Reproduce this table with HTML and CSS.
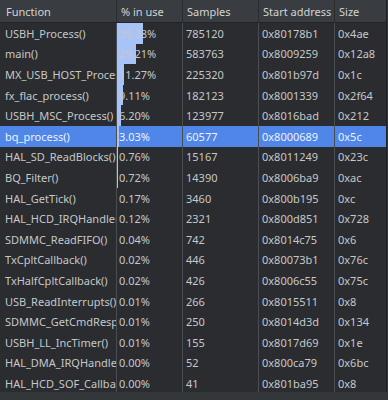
FILE: index.html
```html
<!DOCTYPE html>
<html>
<head>
<meta charset="utf-8">
<link rel="stylesheet" href="styles.css">
</head>
<body>
<div class="table">
  <div class="header">
    <div class="hcell">Function</div>
    <div class="hcell">% in use</div>
    <div class="hcell">Samples</div>
    <div class="hcell">Start address</div>
    <div class="hcell">Size</div>
  </div>
  <div class="rows">
    <div class="row"><div class="cell fn">USBH_Process()</div><div class="cell pct"><span class="bar" style="width:39.28%"></span><span class="val">39.28%</span></div><div class="cell">785120</div><div class="cell">0x80178b1</div><div class="cell">0x4ae</div></div>
    <div class="row"><div class="cell fn">main()</div><div class="cell pct"><span class="bar" style="width:29.21%"></span><span class="val">29.21%</span></div><div class="cell">583763</div><div class="cell">0x8009259</div><div class="cell">0x12a8</div></div>
    <div class="row"><div class="cell fn">MX_USB_HOST_Process()</div><div class="cell pct"><span class="bar" style="width:11.27%"></span><span class="val">11.27%</span></div><div class="cell">225320</div><div class="cell">0x801b97d</div><div class="cell">0x1c</div></div>
    <div class="row"><div class="cell fn">fx_flac_process()</div><div class="cell pct"><span class="bar" style="width:9.11%"></span><span class="val">9.11%</span></div><div class="cell">182123</div><div class="cell">0x8001339</div><div class="cell">0x2f64</div></div>
    <div class="row"><div class="cell fn">USBH_MSC_Process()</div><div class="cell pct"><span class="bar" style="width:6.20%"></span><span class="val">6.20%</span></div><div class="cell">123977</div><div class="cell">0x8016bad</div><div class="cell">0x212</div></div>
    <div class="row sel"><div class="cell fn">bq_process()</div><div class="cell pct"><span class="bar" style="width:3.03%"></span><span class="val">3.03%</span></div><div class="cell">60577</div><div class="cell">0x8000689</div><div class="cell">0x5c</div></div>
    <div class="row"><div class="cell fn">HAL_SD_ReadBlocks()</div><div class="cell pct"><span class="bar" style="width:0.76%"></span><span class="val">0.76%</span></div><div class="cell">15167</div><div class="cell">0x8011249</div><div class="cell">0x23c</div></div>
    <div class="row"><div class="cell fn">BQ_Filter()</div><div class="cell pct"><span class="bar" style="width:0.72%"></span><span class="val">0.72%</span></div><div class="cell">14390</div><div class="cell">0x8006ba9</div><div class="cell">0xac</div></div>
    <div class="row"><div class="cell fn">HAL_GetTick()</div><div class="cell pct"><span class="val">0.17%</span></div><div class="cell">3460</div><div class="cell">0x800b195</div><div class="cell">0xc</div></div>
    <div class="row"><div class="cell fn">HAL_HCD_IRQHandler()</div><div class="cell pct"><span class="val">0.12%</span></div><div class="cell">2321</div><div class="cell">0x800d851</div><div class="cell">0x728</div></div>
    <div class="row"><div class="cell fn">SDMMC_ReadFIFO()</div><div class="cell pct"><span class="val">0.04%</span></div><div class="cell">742</div><div class="cell">0x8014c75</div><div class="cell">0x6</div></div>
    <div class="row"><div class="cell fn">TxCpltCallback()</div><div class="cell pct"><span class="val">0.02%</span></div><div class="cell">446</div><div class="cell">0x80073b1</div><div class="cell">0x76c</div></div>
    <div class="row"><div class="cell fn">TxHalfCpltCallback()</div><div class="cell pct"><span class="val">0.02%</span></div><div class="cell">426</div><div class="cell">0x8006c55</div><div class="cell">0x75c</div></div>
    <div class="row"><div class="cell fn">USB_ReadInterrupts()</div><div class="cell pct"><span class="val">0.01%</span></div><div class="cell">266</div><div class="cell">0x8015511</div><div class="cell">0x8</div></div>
    <div class="row"><div class="cell fn">SDMMC_GetCmdResp1()</div><div class="cell pct"><span class="val">0.01%</span></div><div class="cell">250</div><div class="cell">0x8014d3d</div><div class="cell">0x134</div></div>
    <div class="row"><div class="cell fn">USBH_LL_IncTimer()</div><div class="cell pct"><span class="val">0.01%</span></div><div class="cell">155</div><div class="cell">0x8017d69</div><div class="cell">0x1e</div></div>
    <div class="row"><div class="cell fn">HAL_DMA_IRQHandler()</div><div class="cell pct"><span class="val">0.00%</span></div><div class="cell">52</div><div class="cell">0x800ca79</div><div class="cell">0x6bc</div></div>
    <div class="row"><div class="cell fn">HAL_HCD_SOF_Callback()</div><div class="cell pct"><span class="val">0.00%</span></div><div class="cell">41</div><div class="cell">0x801ba95</div><div class="cell">0x8</div></div>
  </div>
</div>
</body>
</html>
```
FILE: styles.css
```css
html, body {
  margin: 0;
  padding: 0;
  background: #34373a;
  height: 400px;
  overflow: hidden;
}

.table {
  width: 387px;
  height: 392px;
  background: #2a2c2f;
  border-right: 1px solid #1f2023;
  box-sizing: border-box;
  font-family: "Noto Sans", "DejaVu Sans", sans-serif;
  font-size: 11px;
  color: #c5c8cb;
  overflow: hidden;
}

.header {
  display: grid;
  grid-template-columns: 116px 66px 76px 76px 1fr;
  height: 22px;
  background: #393c40;
  border-bottom: 1px solid #232427;
  color: #d2d4d7;
}

.hcell {
  display: flex;
  align-items: center;
  padding-left: 4px;
  border-left: 1px solid #2a2c2f;
  white-space: nowrap;
  overflow: hidden;
}

.hcell:first-child {
  border-left: none;
  padding-left: 6px;
}

.rows {
  display: flex;
  flex-direction: column;
}

.row {
  display: grid;
  grid-template-columns: 116px 66px 76px 76px 1fr;
  height: 20.6px;
}

.row.sel {
  background: #4f86e8;
  color: #eef2fa;
}

.cell {
  display: flex;
  align-items: center;
  padding-left: 3px;
  border-left: 1px solid #4a4d52;
  white-space: nowrap;
  overflow: hidden;
  position: relative;
}

.cell.fn {
  border-left: none;
  padding-left: 5px;
}

.cell.pct {
  padding-left: 2px;
}

.bar {
  position: absolute;
  left: 0;
  top: 0;
  bottom: 0;
  background: #a8c3f7;
}

.val {
  position: relative;
}
```
